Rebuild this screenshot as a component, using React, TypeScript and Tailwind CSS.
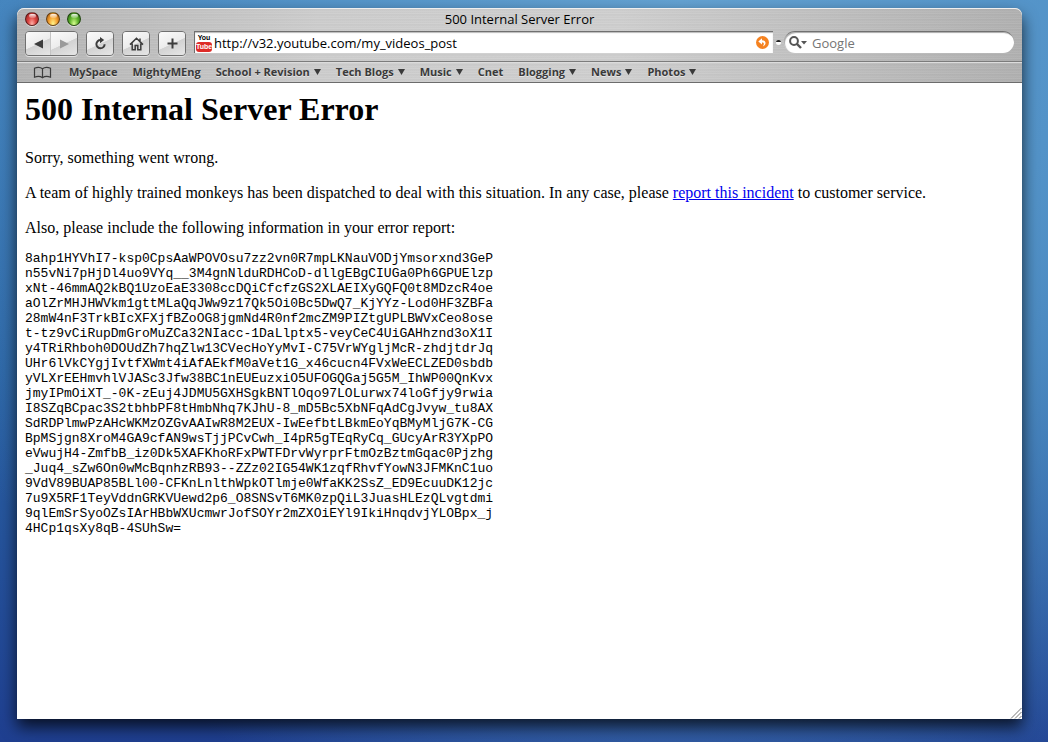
import React, { useState } from 'react';

const bookmarks = [
  { label: 'MySpace', menu: false },
  { label: 'MightyMEng', menu: false },
  { label: 'School + Revision', menu: true },
  { label: 'Tech Blogs', menu: true },
  { label: 'Music', menu: true },
  { label: 'Cnet', menu: false },
  { label: 'Blogging', menu: true },
  { label: 'News', menu: true },
  { label: 'Photos', menu: true },
];

const report = `8ahp1HYVhI7-ksp0CpsAaWPOVOsu7zz2vn0R7mpLKNauVODjYmsorxnd3GeP
n55vNi7pHjDl4uo9VYq__3M4gnNlduRDHCoD-dllgEBgCIUGa0Ph6GPUElzp
xNt-46mmAQ2kBQ1UzoEaE3308ccDQiCfcfzGS2XLAEIXyGQFQ0t8MDzcR4oe
aOlZrMHJHWVkm1gttMLaQqJWw9z17Qk5Oi0Bc5DwQ7_KjYYz-Lod0HF3ZBFa
28mW4nF3TrkBIcXFXjfBZoOG8jgmNd4R0nf2mcZM9PIZtgUPLBWVxCeo8ose
t-tz9vCiRupDmGroMuZCa32NIacc-1DaLlptx5-veyCeC4UiGAHhznd3oX1I
y4TRiRhboh0DOUdZh7hqZlw13CVecHoYyMvI-C75VrWYgljMcR-zhdjtdrJq
UHr6lVkCYgjIvtfXWmt4iAfAEkfM0aVet1G_x46cucn4FVxWeECLZED0sbdb
yVLXrEEHmvhlVJASc3Jfw38BC1nEUEuzxiO5UFOGQGaj5G5M_IhWP00QnKvx
jmyIPmOiXT_-0K-zEuj4JDMU5GXHSgkBNTlOqo97LOLurwx74loGfjy9rwia
I8SZqBCpac3S2tbhbPF8tHmbNhq7KJhU-8_mD5Bc5XbNFqAdCgJvyw_tu8AX
SdRDPlmwPzAHcWKMzOZGvAAIwR8M2EUX-IwEefbtLBkmEoYqBMyMljG7K-CG
BpMSjgn8XroM4GA9cfAN9wsTjjPCvCwh_I4pR5gTEqRyCq_GUcyArR3YXpPO
eVwujH4-ZmfbB_iz0Dk5XAFKhoRFxPWTFDrvWyrprFtmOzBztmGqac0Pjzhg
_Juq4_sZw6On0wMcBqnhzRB93--ZZz02IG54WK1zqfRhvfYowN3JFMKnC1uo
9VdV89BUAP85BLl00-CFKnLnlthWpkOTlmje0WfaKK2SsZ_ED9EcuuDK12jc
7u9X5RF1TeyVddnGRKVUewd2p6_O8SNSvT6MK0zpQiL3JuasHLEzQLvgtdmi
9qlEmSrSyoOZsIArHBbWXUcmwrJofSOYr2mZXOiEYl9IkiHnqdvjYLOBpx_j
4HCp1qsXy8qB-4SUhSw=`;

const lights = [
  { label: 'Close', color: 'bg-[radial-gradient(ellipse_at_50%_90%,#ffb0a8_0%,#dd4844_45%,#8e1d1c_100%)]' },
  { label: 'Minimize', color: 'bg-[radial-gradient(ellipse_at_50%_90%,#fff58c_0%,#f5a030_50%,#9c5210_100%)]' },
  { label: 'Zoom', color: 'bg-[radial-gradient(ellipse_at_50%_90%,#d8ff90_0%,#5fb32c_50%,#226210_100%)]' },
];

const toolButton =
  'flex h-[23px] items-center justify-center bg-[linear-gradient(155deg,#fbfbfb_0%,#ececec_50%,#d2d2d2_52%,#e6e6e6_100%)] text-[#3c3c3c]';
const toolFrame = 'overflow-hidden rounded-[4px] border border-[#707070] shadow-[0_1px_0_#e2e2e2]';

function TitleBar() {
  return (
    <div className="flex h-[22px] items-center px-2">
      <div className="flex flex-1 gap-[7px]">
        {lights.map((light) => (
          <button
            key={light.label}
            aria-label={light.label}
            className={`flex h-[14px] w-[14px] justify-center rounded-full border border-black/50 shadow-[0_1px_0_rgba(255,255,255,0.6)] ${light.color}`}
          >
            <span className="mt-px h-[4px] w-[7px] rounded-full bg-linear-to-b from-white/90 to-white/20" />
          </button>
        ))}
      </div>
      <div className="text-[13px] leading-4">500 Internal Server Error</div>
      <div className="flex-1" />
    </div>
  );
}

function SiteIcon() {
  return (
    <span className="flex w-4 shrink-0 flex-col items-center font-['Liberation_Sans',sans-serif] text-[7px] leading-[8px] font-bold">
      <span>You</span>
      <span className="flex h-[10px] w-4 items-center justify-center rounded-[3px] bg-[#dd2c28] text-[7px] text-white">
        Tube
      </span>
    </span>
  );
}

function Toolbar() {
  const [url, setUrl] = useState('http://v32.youtube.com/my_videos_post');
  const [query, setQuery] = useState('');

  return (
    <div className="flex h-[31px] items-start px-2 pt-px">
      <div className={`flex ${toolFrame}`}>
        <button aria-label="Back" className={`${toolButton} w-[25px] border-r border-[#c4c4c4]`}>
          <svg width="9" height="10" viewBox="0 0 9 10" fill="currentColor">
            <path d="M0 5 9 0.5v9z" />
          </svg>
        </button>
        <button aria-label="Forward" className={`${toolButton} w-[26px]`}>
          <svg width="9" height="10" viewBox="0 0 9 10" fill="#9a9a9a">
            <path d="M9 5 0 0.5v9z" />
          </svg>
        </button>
      </div>
      <div className={`ml-2 ${toolFrame}`}>
        <button aria-label="Reload" className={`${toolButton} w-[26px]`}>
          <svg width="13" height="13" viewBox="0 0 13 13">
            <path d="M10.6 7.2A4.1 4.1 0 1 1 6.6 3.1" fill="none" stroke="currentColor" strokeWidth="2" />
            <path d="M6 0v6.2l4.2-3.1z" fill="currentColor" />
          </svg>
        </button>
      </div>
      <div className={`ml-2 ${toolFrame}`}>
        <button aria-label="Home" className={`${toolButton} w-[26px]`}>
          <svg width="15" height="14" viewBox="0 0 15 14" fill="none" stroke="currentColor" strokeWidth="1.5">
            <path d="M1 7.6 7.5 1.2 14 7.6M3.2 6.5v6.2h3V8.6h2.6v4.1h3V6.5M11 4V1.6" />
          </svg>
        </button>
      </div>
      <div className={`ml-2 ${toolFrame}`}>
        <button aria-label="Add bookmark" className={`${toolButton} w-[26px]`}>
          <svg width="11" height="11" viewBox="0 0 11 11" stroke="currentColor" strokeWidth="2">
            <path d="M5.5 0.5v10M0.5 5.5h10" />
          </svg>
        </button>
      </div>
      <div className="ml-2 flex h-[22px] flex-1 items-center border-t border-l border-[#707070] bg-white pr-1 pl-px shadow-[inset_0_1px_1px_#bbb]">
        <SiteIcon />
        <input
          aria-label="Address"
          value={url}
          onChange={(e) => setUrl(e.target.value)}
          className="ml-[2px] min-w-0 flex-1 bg-transparent text-[13px] leading-4 outline-none"
        />
        <button aria-label="SnapBack">
          <svg width="13" height="13" viewBox="0 0 13 13">
            <circle cx="6.5" cy="6.5" r="6.5" fill="#f58220" />
            <path d="M6 2.200 2.300 5.400 6 8.600V6.600c2.200 0 2.400 1.500.8 3.800 3.800-1.800 3.800-6-.8-6.200z" fill="#fff" />
          </svg>
        </button>
      </div>
      <div className="mx-[3px] mt-[9px] h-[5px] w-[5px] rounded-full bg-linear-to-b from-[#222] from-50% to-white to-50%" />
      <div className="flex h-[22px] w-[230px] items-center rounded-full border-t border-[#707070] bg-white pl-[5px] shadow-[inset_1px_1px_1px_#aaa]">
        <svg width="18" height="13" viewBox="0 0 18 13" className="shrink-0">
          <circle cx="5" cy="5" r="3.9" fill="none" stroke="#555" strokeWidth="2" />
          <path d="m8 8 4 4" stroke="#555" strokeWidth="2.4" />
          <path d="M12 5h6l-3 3.5z" fill="#555" />
        </svg>
        <input
          aria-label="Google search"
          placeholder="Google"
          value={query}
          onChange={(e) => setQuery(e.target.value)}
          className="ml-[5px] min-w-0 flex-1 bg-transparent text-[13px] leading-4 outline-none placeholder:text-[#757575]"
        />
      </div>
    </div>
  );
}

function BookmarksBar() {
  return (
    <nav className="flex h-[22px] items-center border-t border-b border-t-[#7c7c7c] border-b-[#6c6c6c] pl-4 shadow-[inset_0_1px_0_#dcdcdc]">
      <button aria-label="Show all bookmarks" className="mr-[17px]">
        <svg width="19" height="13" viewBox="0 0 19 13" fill="none" stroke="#3c3c3c" strokeWidth="1.2">
          <path d="M9.500 2.800C7.500 1.200 4 1.200 1.500 2.200v9c2.500-.9 6-.9 8 .6 2-1.500 5.500-1.500 8-.6v-9C15 1.200 11.500 1.200 9.500 2.800zM9.500 2.800v9" />
        </svg>
      </button>
      <div className="flex items-center gap-[15px]">
        {bookmarks.map((item) => (
          <button
            key={item.label}
            className="flex items-center gap-1 text-[11px] leading-4 font-bold whitespace-nowrap text-[#3a3a3a] [text-shadow:0_1px_0_rgba(255,255,255,0.5)]"
          >
            {item.label}
            {item.menu && (
              <svg width="7" height="6" viewBox="0 0 7 6" fill="currentColor">
                <path d="M0 0h7L3.5 6z" />
              </svg>
            )}
          </button>
        ))}
      </div>
    </nav>
  );
}

export default function App() {
  return (
    <div className="flex min-h-screen flex-col bg-[radial-gradient(ellipse_at_65%_0%,#64a2d2_0%,#5393c8_40%,rgba(58,120,180,0)_85%),linear-gradient(180deg,#3f7fba_0%,#2a63a4_50%,#1f3f90_100%)] pt-2 pr-[26px] pb-[23px] pl-[17px] font-['Open_Sans',sans-serif] text-black">
      <div className="flex flex-1 flex-col rounded-t-[7px] bg-white shadow-[0_8px_16px_0_rgba(0,0,0,0.75)]">
        <header className="rounded-t-[7px] bg-[repeating-linear-gradient(180deg,rgba(255,255,255,0.12)_0px,rgba(255,255,255,0)_1px,rgba(0,0,0,0.04)_2px,rgba(255,255,255,0.06)_3px,rgba(0,0,0,0.02)_5px),linear-gradient(90deg,#b4b4b4_0%,#cdcdcd_30%,#cfcfcf_60%,#b0b0b0_100%)] shadow-[inset_0_1px_0_#efefef]">
          <TitleBar />
          <Toolbar />
          <BookmarksBar />
        </header>
        <main className="flex-1 px-2 pt-2 font-['Liberation_Serif',serif] text-[16px] leading-[18px]">
          <h1 className="text-[32px] leading-9 font-bold">500 Internal Server Error</h1>
          <p className="mt-[22px]">Sorry, something went wrong.</p>
          <p className="mt-[17px]">
            A team of highly trained monkeys has been dispatched to deal with this situation. In any case, please{' '}
            <a href="#report" className="text-[#0000ee] underline">
              report this incident
            </a>{' '}
            to customer service.
          </p>
          <p className="mt-[17px]">Also, please include the following information in your error report:</p>
          <pre className="mt-[14px] font-['Liberation_Mono',monospace] text-[13px] leading-[15px]">{report}</pre>
        </main>
        <div className="flex justify-end">
          <svg width="12" height="12" viewBox="0 0 12 12" stroke="#777" strokeWidth="1">
            <path d="M1 11.500 11.500 1M5 11.500l6.500-6.500M9 11.500l2.500-2.500" />
          </svg>
        </div>
      </div>
    </div>
  );
}
